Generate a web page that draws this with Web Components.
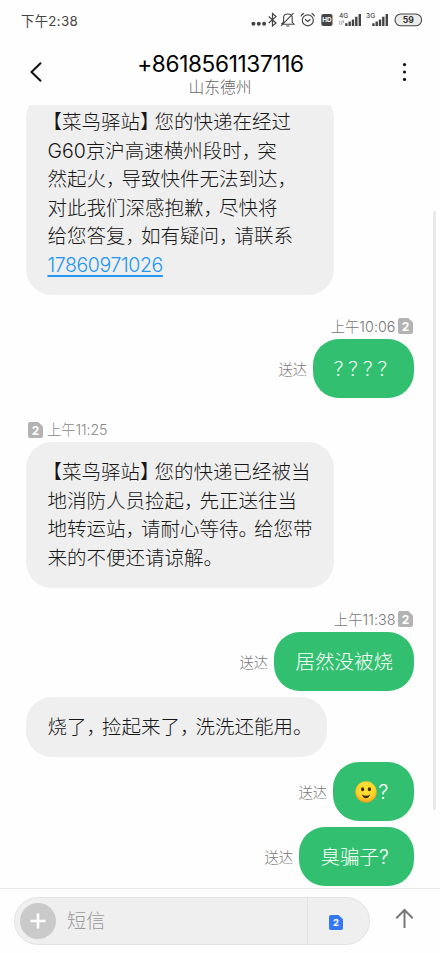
<!DOCTYPE html>
<html lang="zh-CN">
<head>
<meta charset="utf-8">
<title>短信</title>
<style>
html,body{margin:0;height:100%;background:#fefefe;overflow:hidden}
body{font-family:Inter,"Noto Sans CJK SC",sans-serif;font-weight:300;color:#161616}
</style>
</head>
<body>
<sms-app></sms-app>
<script>
function define(name, html, setup) {
  const t = document.createElement('template');
  t.innerHTML = html;
  customElements.define(name, class extends HTMLElement {
    constructor() {
      super();
      this.attachShadow({mode: 'open'}).appendChild(t.content.cloneNode(true));
    }
    connectedCallback() { if (setup) setup(this, this.shadowRoot); }
  });
}

define('sim-badge', `
<style>:host{display:block;width:15px;height:16px;color:#b3b3b3}svg{display:block;width:100%;height:100%}text{font:700 var(--digit,12px) Inter,sans-serif;fill:#fff}</style>
<svg viewBox="0 0 15 16"><path d="M2 0H10.2L15 4.6V14Q15 16 13 16H2Q0 16 0 14V2Q0 0 2 0Z" fill="currentColor"/><text x="7.5" y="8.2" dy=".36em" text-anchor="middle">2</text></svg>`);

define('signal-bars', `
<style>:host{display:block;width:24px;height:14px}
svg{display:block}text{font:500 6.6px Inter,sans-serif;fill:#444}</style>
<svg width="24" height="14" viewBox="0 0 24 14"><text x="0" y="5.4" id="t"></text>
<g id="lte" stroke="#999" stroke-width=".8" fill="none"><path d="M.8 7.5V12M2.8 7.8V12M3 8H5M4.6 8V10"/></g>
<g fill="#444"><path d="M6.2 10.2h2.4V13h-2.4zM9.5 8.6h2.4V13h-2.4zM12.8 6.4h2.4V13h-2.4zM16.1 3.8h2.4V13h-2.4zM19.6 1h2.4V13h-2.4z"/></g></svg>`,
(h, r) => { r.getElementById('t').textContent = h.getAttribute('net'); if (!h.hasAttribute('lte')) r.getElementById('lte').remove(); });

define('status-bar', `
<style>
:host{display:flex;height:40px;box-sizing:border-box;padding:0 17px 0 21px;align-items:center;color:#444}
.time{font-size:13.3px;font-weight:400;letter-spacing:.35px;flex:1}
.icons{display:flex;align-items:center}
svg{display:block}
text{font:700 8.6px Inter,sans-serif;fill:#333}
.hd{font-size:6.4px;fill:#fff}
</style>
<span class="time">下午2:38</span>
<div class="icons">
<svg style="margin-right:-1px;margin-left:-5px" width="17" height="16" viewBox="0 0 17 16" fill="#444"><circle cx="2.4" cy="11.8" r="2"/><circle cx="7.8" cy="11.8" r="2"/><circle cx="13.1" cy="11.8" r="2"/></svg>
<svg width="14" height="16" viewBox="0 0 14 16" fill="none" stroke="#444" stroke-width="1.2"><path d="M1.7 4.5L9 11 5.5 14V1.5L9 4.6 1.7 11"/></svg>
<svg style="margin-left:-1px" width="19" height="16" viewBox="0 0 19 16" fill="none" stroke="#444" stroke-width="1.1"><path d="M1.5 12.2H14L12.2 10V5.6Q12.2 2 7.9 2Q3.6 2 3.6 5.6V10L1.5 12.2M6.3 14H9.5M1.1 13.8L13.5 1.2"/></svg>
<svg width="21" height="16" viewBox="0 0 21 16" fill="none" stroke="#444" stroke-width="1.15"><circle cx="8.8" cy="8.3" r="5.5"/><path d="M6 7.2L8.8 9.5 11.4 7.2M2 4.4Q2.8 2.2 5 1.4M15.6 4.4Q14.8 2.2 12.6 1.4"/></svg>
<svg width="19" height="16" viewBox="0 0 19 16"><rect x="1.3" y="2" width="11.2" height="12" rx="2" fill="#444"/><text class="hd" x="6.9" y="10.4" text-anchor="middle">HD</text></svg>
<signal-bars net="4G" lte style="margin-right:3px"></signal-bars>
<signal-bars net="3G" style="margin-right:4px"></signal-bars>
<svg width="29" height="14" viewBox="0 0 29 14"><rect x="1" y="1" width="26.6" height="11.8" rx="5.9" fill="#ececec" stroke="#444" stroke-width="1.1"/><text x="14.2" y="10" text-anchor="middle">59</text></svg>
</div>`);

define('chat-header', `
<style>
:host{display:grid;grid-template-columns:72px 1fr 72px;height:65px;box-sizing:border-box;justify-items:center}
svg{display:block}
.names{text-align:center}
.num{font-size:22.6px;line-height:28px;font-weight:400;color:#000;margin-top:9.5px;white-space:nowrap;letter-spacing:-.35px;padding-left:1px}
.place{font-size:15.8px;line-height:19px;margin-top:0;color:#666}
</style>
<svg width="72" height="65" viewBox="0 0 72 65" fill="none" stroke="#111" stroke-width="2"><path d="M41 22.8L31.5 32 41 41.2"/></svg>
<div class="names"><div class="num"><slot name="number"></slot></div><div class="place"><slot name="place"></slot></div></div>
<svg width="72" height="65" viewBox="0 0 72 65" fill="#111"><circle cx="36.5" cy="24.6" r="1.6"/><circle cx="36.5" cy="32" r="1.6"/><circle cx="36.5" cy="39.4" r="1.6"/></svg>`);

define('time-stamp', `
<style>
:host{display:flex;height:16px;align-items:center;gap:4px;font-size:14.3px;line-height:16px;color:#888;margin:0 1px 4.5px 2px;letter-spacing:-.1px}
:host([out]){flex-direction:row-reverse;gap:2px;margin-right:1.5px;color:#777;letter-spacing:.05px}
span{padding-top:1px}
</style><sim-badge></sim-badge><span><slot></slot></span>`);

define('chat-bubble', `
<style>
:host{display:flex;align-items:center;justify-content:flex-start;gap:6px}
:host([out]){justify-content:flex-end}
.b{box-sizing:border-box;padding:16px 21.5px 15px;border-radius:26px;background:#efefef;font-size:19.5px;line-height:28.6px;width:var(--w);white-space:nowrap;color:#161616}
:host([out]) .b{background:#33bf70;color:#fff}
.s{font-size:14.3px;color:#777}
:host(:not([out])) .s{display:none}
</style><span class="s">送达</span><div class="b"><slot></slot></div>`);

define('message-composer', `
<style>
:host{display:flex;height:65px;box-sizing:border-box;border-top:1px solid #e9e9e9;padding:8px 0 0 14px;background:#fefefe}
.field{display:flex;align-items:center;box-sizing:border-box;width:356px;height:48px;border:1px solid #e3e3e3;border-radius:24px;background:#efefef}
.plus{display:block;margin-left:5px}
.hint{flex:1;font-size:19.2px;color:#999;padding:0 0 3px 11px}
.sim{display:flex;align-items:center;box-sizing:border-box;width:62px;height:46px;border-left:1px solid #e2e2e2;padding:2px 0 0 21px}
sim-badge{color:#3478f6;width:14px;height:15px;--digit:10px}
.send{display:block}
</style>
<div class="field"><svg class="plus" width="36" height="36" viewBox="0 0 36 36"><circle cx="18" cy="18" r="18" fill="#cacaca"/><path d="M10.5 18H25.5M18 10.5V25.5" stroke="#fff" stroke-width="2.6"/></svg><span class="hint">短信</span><div class="sim"><sim-badge></sim-badge></div></div>
<svg class="send" width="70" height="48" viewBox="0 0 70 48" fill="none" stroke="#777" stroke-width="2"><path d="M34.5 31V13.5M26.3 21.2L34.5 13 42.7 21.2"/></svg>`);

define('smile-face', `
<style>:host{display:inline-block;width:22px;height:22px;vertical-align:-4.5px;margin-right:2px}svg{display:block}</style>
<svg width="22" height="22" viewBox="0 0 22 22"><defs><radialGradient id="g" cx=".5" cy=".38" r=".62"><stop offset="0" stop-color="#ffe436"/><stop offset=".65" stop-color="#ffd52c"/><stop offset="1" stop-color="#f39a1d"/></radialGradient></defs><circle cx="11" cy="11" r="10.7" fill="url(#g)"/><ellipse cx="7.6" cy="8.3" rx="1.6" ry="2" fill="#44280f"/><ellipse cx="14.4" cy="8.3" rx="1.6" ry="2" fill="#44280f"/><path d="M6.8 13.6Q11 16 15.2 13.6Q14 17.2 11 17.2Q8 17.2 6.8 13.6Z" fill="#44280f"/></svg>`);

define('sms-app', `
<style>
:host{display:flex;flex-direction:column;width:440px;height:953px;background:#fefefe}
.chat{flex:1;min-height:0;overflow:hidden;position:relative}
.list{display:flex;flex-direction:column;margin:-13px 26px 0}
.bar{position:absolute;right:4px;top:106px;width:3px;height:599px;border-radius:2px;background:#e9e9e9}
i{font-style:normal;letter-spacing:-4px}
i.o{margin-left:-5px;letter-spacing:0}
i.c{letter-spacing:-5px}
i.q{letter-spacing:-4.9px;margin-left:-1px}
a{color:#2196f3;letter-spacing:-.4px;text-decoration:underline;text-decoration-thickness:1.5px;text-underline-offset:3px}
</style>
<status-bar></status-bar>
<chat-header><span slot="number">+8618561137116</span><span slot="place">山东德州</span></chat-header>
<div class="chat"><div class="list">
<chat-bubble style="--w:308px"><i class="o">【</i>菜鸟驿站<i class="c">】</i>您的快递在经过<br>G60京沪高速横州段时<i>，</i>突<br>然起火<i>，</i>导致快件无法到达<i>，</i><br>对此我们深感抱歉<i>，</i>尽快将<br>给您答复<i>，</i>如有疑问<i>，</i>请联系<br><a>17860971026</a></chat-bubble>
<time-stamp out style="margin-top:23.5px">上午10:06</time-stamp>
<chat-bubble out style="--w:101px"><i class="q">？？？？</i></chat-bubble>
<time-stamp style="margin-top:23.5px">上午11:25</time-stamp>
<chat-bubble style="--w:308px"><i class="o">【</i>菜鸟驿站<i class="c">】</i>您的快递已经被当<br>地消防人员捡起<i>，</i>先正送往当<br>地转运站<i>，</i>请耐心等待<i>。</i>给您带<br>来的不便还请谅解<i>。</i></chat-bubble>
<time-stamp out style="margin-top:23.5px">上午11:38</time-stamp>
<chat-bubble out style="--w:140px">居然没被烧</chat-bubble>
<chat-bubble style="--w:301px;margin-top:5.8px">烧了<i>，</i>捡起来了<i>，</i>洗洗还能用<i>。</i></chat-bubble>
<chat-bubble out style="--w:81px;margin-top:5.3px"><smile-face></smile-face>?</chat-bubble>
<chat-bubble out style="--w:115px;margin-top:5.3px">臭骗子?</chat-bubble>
</div><div class="bar"></div></div>
<message-composer></message-composer>`);
</script>
</body>
</html>
